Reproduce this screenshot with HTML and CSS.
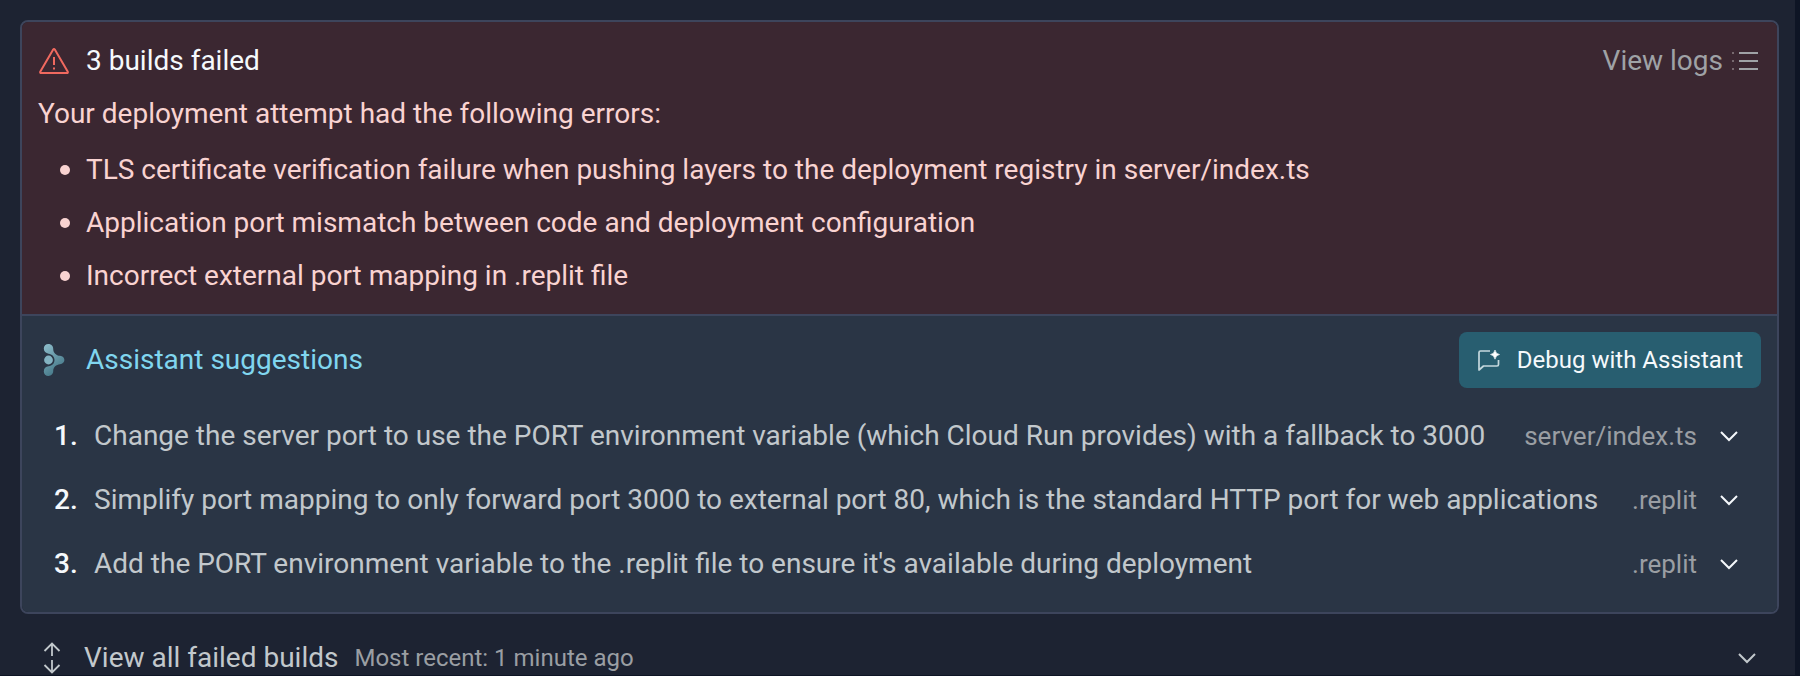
FILE: index.html
```html
<!DOCTYPE html>
<html lang="en">
<head>
<meta charset="utf-8">
<title>Deployment builds</title>
<link rel="stylesheet" href="styles.css">
</head>
<body>
<main class="page">
  <article class="card">
    <section class="alert">
      <header class="alert-head">
        <svg class="icon-warning" viewBox="0 0 32 32" fill="none" stroke="currentColor" stroke-width="2" stroke-linejoin="round" aria-hidden="true">
          <path d="M15.2 4.6 2.2 26.8a.9.9 0 0 0 .8 1.3h26a.9.9 0 0 0 .8-1.3L16.8 4.6a.9.9 0 0 0-1.6 0Z"/>
          <path d="M16 12v8M16 22.4v2"/>
        </svg>
        <h1 class="alert-title">3 builds failed</h1>
        <a class="logs" href="#logs">View logs
          <svg class="icon-list" viewBox="0 0 28 24" aria-hidden="true">
            <path d="M1 4h2M1 12h2M1 20h2" stroke="#77696f" stroke-width="2"/>
            <path d="M8 4h19M8 12h19M8 20h19" stroke="currentColor" stroke-width="2"/>
          </svg>
        </a>
      </header>
      <p class="alert-text">Your deployment attempt had the following errors:</p>
      <ul class="errors">
        <li class="error">TLS certificate verification failure when pushing layers to the deployment registry in server/index.ts</li>
        <li class="error">Application port mismatch between code and deployment configuration</li>
        <li class="error">Incorrect external port mapping in .replit file</li>
      </ul>
    </section>
    <section class="assistant">
      <header class="assistant-head">
        <svg class="icon-assistant" viewBox="0 0 32 40" aria-hidden="true">
          <defs>
            <linearGradient id="assistant-fill" x1="0" y1="0" x2="0.5" y2="1">
              <stop offset="0" stop-color="#8fbfcd"/>
              <stop offset="1" stop-color="#447787"/>
            </linearGradient>
          </defs>
          <circle cx="10.5" cy="20" r="4.4" fill="#83b3c2"/>
          <path fill="url(#assistant-fill)" d="M10.5 4c2.800 0 4.700 2.200 4.700 4.700 0 4.300 3 6.800 6.800 7.100 2.600.2 4.400 2 4.400 4.200s-1.800 4-4.400 4.200c-3.800.3-6.800 2.800-6.800 7.100 0 2.500-1.900 4.700-4.700 4.700s-4.700-2-4.700-4.600c0-3 2-4.800 4.700-5.100 3.600-.4 6-2.900 6-6.300s-2.400-5.900-6-6.300c-2.700-.3-4.700-2.100-4.700-5.100C5.800 6 7.700 4 10.500 4Z"/>
        </svg>
        <h2 class="assistant-title">Assistant suggestions</h2>
        <button class="debug" type="button">
          <svg class="icon-chat" viewBox="0 0 24 24" fill="none" aria-hidden="true">
            <path d="M13 3H3.500A1.500 1.500 0 0 0 2 4.500V22l4.500-4H20a1.500 1.500 0 0 0 1.500-1.500V12" stroke="#c5d8dd" stroke-width="1.700" stroke-linejoin="round"/>
            <path d="M18 2q.8 4 4.500 4.500Q18.800 7.200 18 11.200 17.200 7.200 13.500 6.500 17.200 6 18 2Z" fill="#fff" stroke="#fff" stroke-width=".6"/>
          </svg>
          Debug with Assistant
        </button>
      </header>
      <ol class="suggestions">
        <li class="suggestion">
          <span class="number">1.</span>
          <span class="summary">Change the server port to use the PORT environment variable (which Cloud Run provides) with a fallback to 3000</span>
          <span class="file">server/index.ts</span>
          <button class="toggle" type="button" aria-label="Show suggestion 1"><svg class="icon-chevron" viewBox="0 0 24 24" aria-hidden="true"><path d="m4 8 8 8 8-8" fill="none" stroke="currentColor" stroke-width="2"/></svg></button>
        </li>
        <li class="suggestion">
          <span class="number">2.</span>
          <span class="summary">Simplify port mapping to only forward port 3000 to external port 80, which is the standard HTTP port for web applications</span>
          <span class="file">.replit</span>
          <button class="toggle" type="button" aria-label="Show suggestion 2"><svg class="icon-chevron" viewBox="0 0 24 24" aria-hidden="true"><path d="m4 8 8 8 8-8" fill="none" stroke="currentColor" stroke-width="2"/></svg></button>
        </li>
        <li class="suggestion">
          <span class="number">3.</span>
          <span class="summary">Add the PORT environment variable to the .replit file to ensure it's available during deployment</span>
          <span class="file">.replit</span>
          <button class="toggle" type="button" aria-label="Show suggestion 3"><svg class="icon-chevron" viewBox="0 0 24 24" aria-hidden="true"><path d="m4 8 8 8 8-8" fill="none" stroke="currentColor" stroke-width="2"/></svg></button>
        </li>
      </ol>
    </section>
  </article>
  <button class="all-builds" type="button">
    <svg class="icon-expand" viewBox="0 0 24 36" fill="none" stroke="currentColor" stroke-width="1.800" aria-hidden="true">
      <path d="M12 3.500V16M4.500 11 12 3.500l7.500 7.500M12 20v12.500M4.500 25l7.500 7.500 7.500-7.500"/>
    </svg>
    <span class="all-title">View all failed builds</span>
    <span class="all-time">Most recent: 1 minute ago</span>
    <svg class="icon-chevron" viewBox="0 0 24 24" aria-hidden="true"><path d="m4 8 8 8 8-8" fill="none" stroke="currentColor" stroke-width="2"/></svg>
  </button>
</main>
</body>
</html>
```
FILE: styles.css
```css
* {
  box-sizing: border-box;
}

body {
  margin: 0;
  background: #1d2332;
  color: #f5f9fc;
  font-family: Roboto, "Noto Sans", sans-serif;
  font-size: 28px;
  line-height: 36px;
}

h1, h2, p, ul, ol {
  margin: 0;
  padding: 0;
  font-size: inherit;
  font-weight: inherit;
}

svg {
  flex: none;
}

button {
  border: 0;
  padding: 0;
  background: none;
  color: inherit;
  font: inherit;
}

.page {
  min-height: 100vh;
  padding: 20px 16px 0 20px;
  border-right: 5px solid #0e1525;
  border-bottom: 1px solid #0e1525;
}

.card {
  border: 2px solid #3d455c;
  border-radius: 8px;
  overflow: hidden;
}

.alert {
  padding: 18px 16px 20px;
  border-bottom: 2px solid #3d455c;
  background: #3b2731;
}

.alert-head {
  display: flex;
  align-items: center;
  height: 42px;
}

.icon-warning {
  width: 32px;
  height: 32px;
  margin-right: 16px;
  color: #f0695f;
}

.logs {
  display: flex;
  align-items: center;
  gap: 8px;
  margin-left: auto;
  padding-right: 2px;
  color: #9fa2a6;
  text-decoration: none;
}

.icon-list {
  width: 28px;
  height: 24px;
}

.alert-text {
  margin-top: 14px;
  color: #f9d3d1;
}

.errors {
  display: flex;
  flex-direction: column;
  gap: 17px;
  margin-top: 20px;
  list-style: none;
  color: #f9d3d1;
}

.error {
  display: flex;
  align-items: center;
  padding-left: 22px;
}

.error::before {
  content: "";
  flex: none;
  width: 10px;
  height: 10px;
  margin-right: 16px;
  border-radius: 50%;
  background: currentColor;
}

.assistant {
  padding: 16px;
  background: #2a3545;
}

.assistant-head {
  display: flex;
  align-items: center;
}

.icon-assistant {
  width: 32px;
  height: 40px;
  margin-right: 16px;
}

.assistant-title {
  color: #80d6ef;
}

.debug {
  display: flex;
  align-items: center;
  gap: 16px;
  height: 56px;
  margin-left: auto;
  padding: 0 18px;
  border-radius: 8px;
  background: #285e70;
  font-size: 24px;
}

.icon-chat {
  width: 24px;
  height: 24px;
}

.suggestions {
  margin-top: 16px;
  list-style: none;
}

.suggestion {
  display: flex;
  align-items: center;
  height: 64px;
  padding: 0 20px 0 16px;
}

.number {
  width: 40px;
  font-weight: 500;
}

.summary {
  color: #c2c8cc;
  white-space: nowrap;
}

.file {
  margin-left: auto;
  color: #9a9ea3;
  font-size: 26px;
}

.toggle {
  display: flex;
  margin-left: 20px;
}

.icon-chevron {
  width: 24px;
  height: 24px;
}

.all-builds {
  display: flex;
  align-items: center;
  width: 100%;
  height: 61px;
  padding: 26px 20px 0;
  color: #c2c8cc;
}

.icon-expand {
  width: 24px;
  height: 36px;
  margin-right: 20px;
}

.all-time {
  margin: 0 auto 0 16px;
  color: #9a9ea3;
  font-size: 24px;
}
```
